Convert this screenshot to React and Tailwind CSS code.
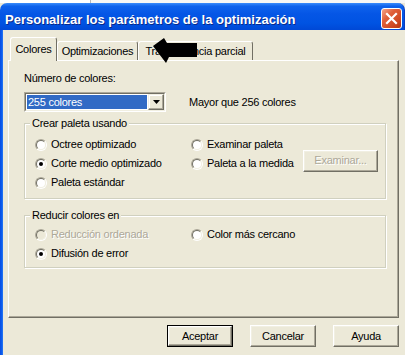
import React from "react";

function Radio({ checked, disabled }) {
  return (
    <span className="flex w-[12px] h-[12px] shrink-0 rounded-full border border-t-[#aca899] border-l-[#aca899] border-b-white border-r-white">
      <span
        className={
          "flex flex-1 items-center justify-center rounded-full border border-t-[#716f64] border-l-[#716f64] border-b-[#f1efe2] border-r-[#f1efe2] " +
          (disabled ? "bg-[#ece9d8]" : "bg-white")
        }
      >
        {checked && <span className="w-[4px] h-[4px] rounded-full bg-black" />}
      </span>
    </span>
  );
}

function RadioRow({ label, checked, disabled, children }) {
  return (
    <div className="flex items-center h-[19px]">
      <Radio checked={checked} disabled={disabled} />
      <span
        className={
          "ml-[4px] leading-[13px] whitespace-nowrap " +
          (disabled ? "text-[#aca899] [text-shadow:1px_1px_0_#fff]" : "text-black")
        }
      >
        {label}
      </span>
      {children}
    </div>
  );
}

function Btn({ children, def, disabled, className = "" }) {
  const inner = (
    <div className="flex flex-1 items-center justify-center border border-t-white border-l-white border-b-[#716f64] border-r-[#716f64] shadow-[inset_-1px_-1px_0_#aca899,inset_1px_1px_0_#f1efe2] bg-[#ece9d8]">
      <span
        className={
          "leading-[13px] " +
          (disabled ? "text-[#aca899] [text-shadow:1px_1px_0_#fff]" : "text-black")
        }
      >
        {children}
      </span>
    </div>
  );
  return (
    <div className={"flex h-[22px] " + (def ? "border border-black " : "") + className}>
      {inner}
    </div>
  );
}

export default function App() {
  return (
    <div className="relative w-[405px] h-[355px] overflow-hidden bg-[#ece9d8] font-['Liberation_Sans',Arial,sans-serif] text-[11px] tracking-[-0.25px] text-black">
      {/* strip above window */}
      <div className="flex h-[3px] bg-white">
        <div className="w-[90px]" />
        <div className="w-px bg-[#b8b8b8]" />
        <div className="flex-1 bg-[#f7f7f5]" />
      </div>

      {/* title bar */}
      <div className="flex items-start h-[27px] rounded-t-[7px] bg-[linear-gradient(to_bottom,#3a8cfb_0%,#0e62ec_12%,#0556e6_40%,#0053e2_75%,#0048d6_100%)] pl-[5px] pr-[2px] border-r border-r-[#0a3cc0]">
        <span className="mt-[9px] text-white font-bold text-[13px] tracking-normal leading-[16px] whitespace-nowrap [text-shadow:1px_1px_0_#0a2a8a]">
          Personalizar los parámetros de la optimización
        </span>
        <div className="ml-auto mt-[5px] flex items-center justify-center w-[21px] h-[21px] rounded-[3px] border border-white bg-[linear-gradient(135deg,#f4a68c_0%,#e0613b_35%,#d14a23_70%,#b8360f_100%)]">
          <svg width="13" height="13" viewBox="0 0 13 13">
            <path d="M2 2 L11 11 M11 2 L2 11" stroke="#fff" strokeWidth="2.2" strokeLinecap="square" />
          </svg>
        </div>
      </div>

      {/* body */}
      <div className="flex h-[325px]">
        <div className="w-[3px] bg-[linear-gradient(to_right,#0a4ce0,#0b5cec,#2a78f4)]" />
        <div className="flex flex-col pl-[5px]">
          {/* tabs */}
          <div className="relative z-10 flex items-end h-[23px] mt-[7px]">
            <div className="ml-[2px] w-[47px] h-[24px] -mb-px flex items-center justify-center bg-[#ece9d8] border-t border-l border-r border-t-white border-l-white border-r-[#716f64] rounded-t-[3px]">
              <span className="leading-[13px]">Colores</span>
            </div>
            <div className="w-[81px] h-[19px] flex items-center justify-center border-t border-l border-r border-t-white border-l-white border-r-[#716f64] rounded-t-[3px]">
              <span className="leading-[13px]">Optimizaciones</span>
            </div>
            <div className="w-[115px] h-[19px] flex items-center justify-center border-t border-l border-r border-t-white border-l-white border-r-[#716f64] rounded-t-[3px]">
              <span className="leading-[13px]">Transparencia parcial</span>
            </div>
          </div>

          {/* panel */}
          <div className="w-[391px] h-[258px] border border-t-white border-l-white border-r-[#716f64] border-b-[#716f64] shadow-[inset_-1px_-1px_0_#aca899] pt-[11px] pl-[15px]">
            <div className="leading-[13px]">Número de colores:</div>
            <div className="flex items-center h-[20px] mt-[7px]">
              <div className="flex w-[142px] h-[20px] border border-t-[#aca899] border-l-[#aca899] border-b-white border-r-white">
                <div className="flex flex-1 border border-t-[#716f64] border-l-[#716f64] border-b-[#f1efe2] border-r-[#f1efe2] bg-white">
                  <div className="flex flex-1 items-center m-px bg-[#316ac5] pl-[1px]">
                    <span className="text-white leading-[13px]">255 colores</span>
                  </div>
                  <div className="flex w-[16px] items-center justify-center border border-t-[#f1efe2] border-l-[#f1efe2] border-b-[#716f64] border-r-[#716f64] shadow-[inset_-1px_-1px_0_#aca899,inset_1px_1px_0_#fff] bg-[#ece9d8]">
                    <svg width="7" height="4" viewBox="0 0 7 4">
                      <path d="M0 0 H7 L3.5 4 Z" fill="#000" />
                    </svg>
                  </div>
                </div>
              </div>
              <span className="ml-[23px] leading-[13px]">Mayor que 256 colores</span>
            </div>

            {/* group 1 */}
            <fieldset className="mt-[5px] w-[362px] border border-[#d0d0bf] shadow-[inset_1px_1px_0_#fff,1px_1px_0_#fff]">
              <legend className="ml-[5px] px-[2px] leading-[13px] bg-[#ece9d8]">Crear paleta usando</legend>
              <div className="flex pt-[5px] pb-[6px]">
                <div className="w-[166px] pl-[10px] flex flex-col">
                  <RadioRow label="Octree optimizado" />
                  <RadioRow label="Corte medio optimizado" checked />
                  <RadioRow label="Paleta estándar" />
                </div>
                <div className="flex flex-1 flex-col">
                  <RadioRow label="Examinar paleta" />
                  <RadioRow label="Paleta a la medida">
                    <Btn disabled className="w-[75px] ml-auto mr-[7px] -mt-[6px]">
                      Examinar...
                    </Btn>
                  </RadioRow>
                </div>
              </div>
            </fieldset>

            {/* group 2 */}
            <fieldset className="mt-[10px] w-[362px] border border-[#d0d0bf] shadow-[inset_1px_1px_0_#fff,1px_1px_0_#fff]">
              <legend className="ml-[5px] px-[2px] leading-[13px] bg-[#ece9d8]">Reducir colores en</legend>
              <div className="flex pt-[3px] pb-[4px]">
                <div className="w-[166px] pl-[10px] flex flex-col">
                  <RadioRow label="Reducción ordenada" disabled />
                  <RadioRow label="Difusión de error" checked />
                </div>
                <div className="flex flex-1 flex-col">
                  <RadioRow label="Color más cercano" />
                </div>
              </div>
            </fieldset>
          </div>

          {/* buttons */}
          <div className="flex justify-end gap-[17px] w-[391px] mt-[7px]">
            <Btn def className="w-[66px]">Aceptar</Btn>
            <Btn className="w-[66px]">Cancelar</Btn>
            <Btn className="w-[66px]">Ayuda</Btn>
          </div>
        </div>
      </div>

      {/* black arrow annotation */}
      <svg className="absolute left-[150px] top-[35px] z-20" width="52" height="30" viewBox="0 0 52 30">
        <path d="M3 11 L14 3 L17 8 L47 8 L47 22 L19 22 L16 28 Z" fill="#000" />
      </svg>
    </div>
  );
}
